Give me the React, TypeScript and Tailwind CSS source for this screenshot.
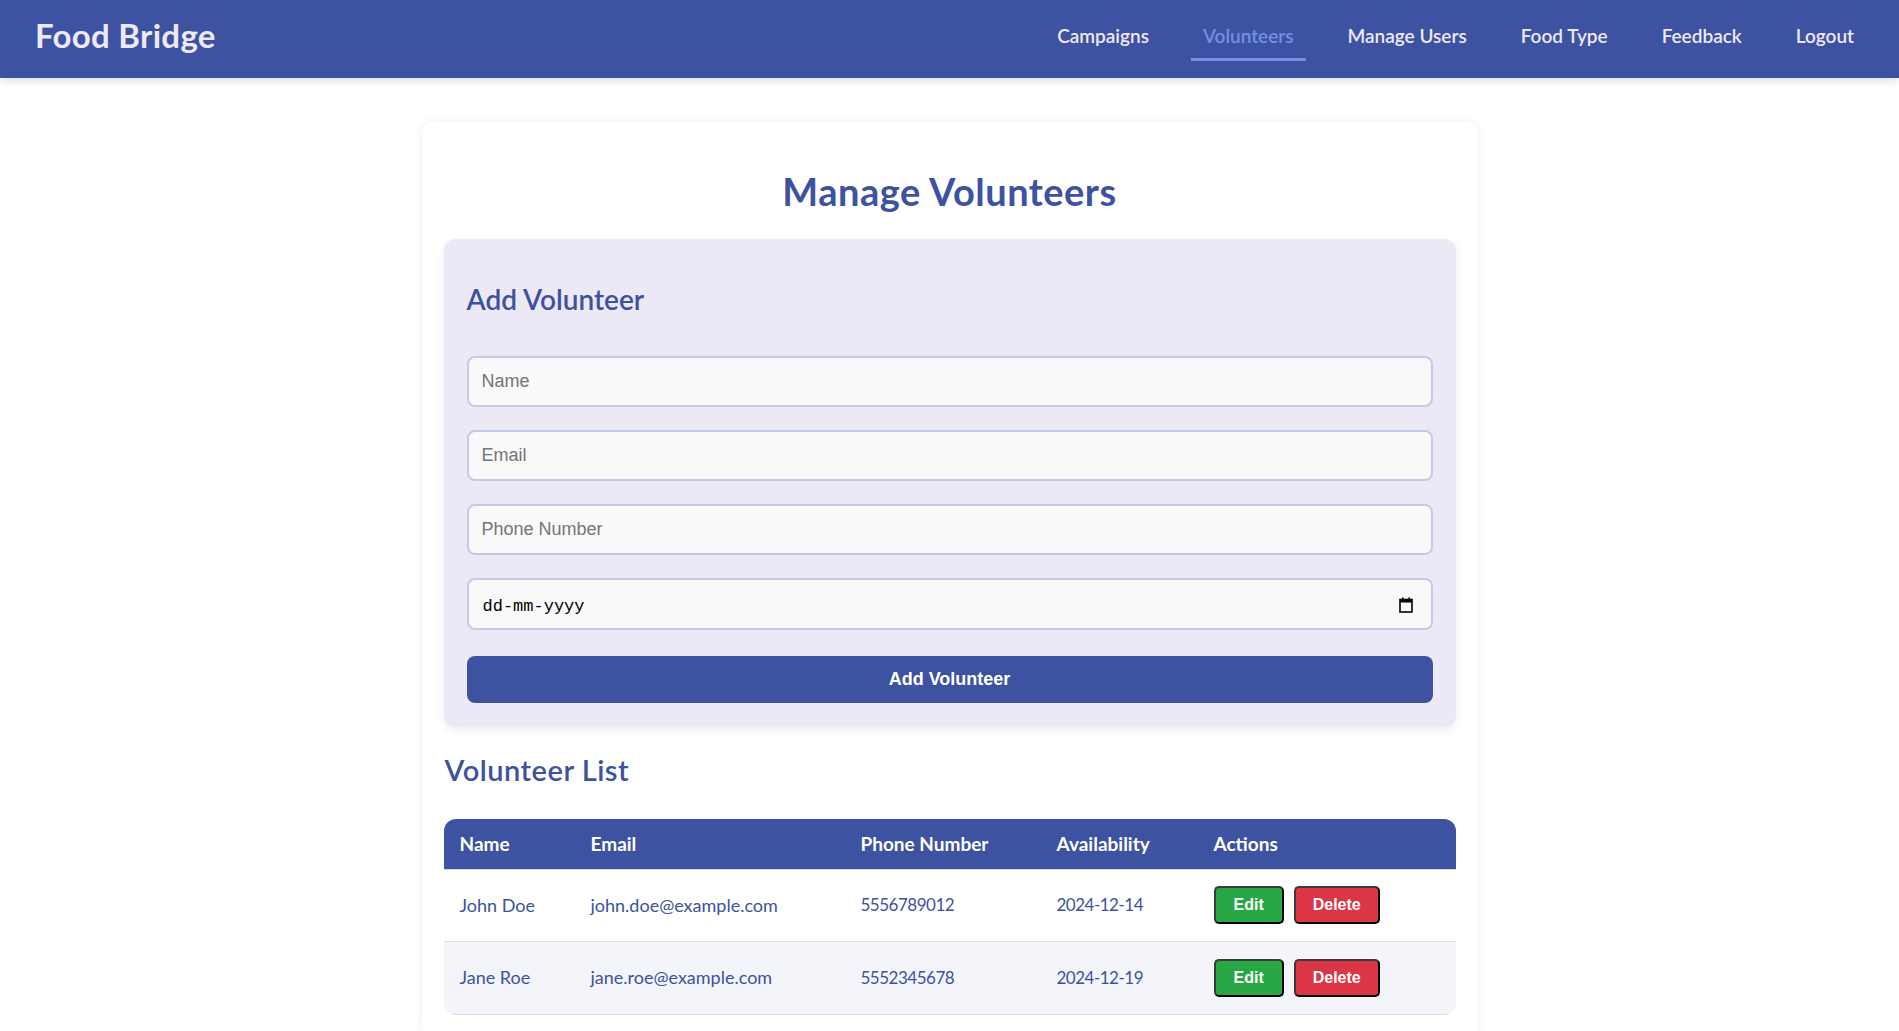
import React from "react";

const navItems = ["Campaigns", "Volunteers", "Manage Users", "Food Type", "Feedback", "Logout"];

const volunteers = [
  { name: "John Doe", email: "john.doe@example.com", phone: "5556789012", date: "2024-12-14" },
  { name: "Jane Roe", email: "jane.roe@example.com", phone: "5552345678", date: "2024-12-19" },
];

function CalendarIcon() {
  return (
    <svg width="14" height="16" viewBox="0 0 14 16" fill="none">
      <rect x="1" y="2.5" width="12" height="12.5" stroke="#000" strokeWidth="1.6" fill="none" />
      <rect x="1" y="2.5" width="12" height="3" fill="#000" />
      <rect x="3" y="0.5" width="1.6" height="3" fill="#000" />
      <rect x="9.4" y="0.5" width="1.6" height="3" fill="#000" />
    </svg>
  );
}

export default function App() {
  return (
    <div className="min-h-screen bg-white font-['Lato',sans-serif]">
      <header className="h-[78px] bg-[#3d52a0] flex items-center justify-between pl-[35px] pr-[33px] shadow-[0_3px_8px_rgba(0,0,0,0.12)]">
        <div className="text-[33px] font-bold text-[#ede8f5] tracking-[0.3px] pb-[7px]">Food Bridge</div>
        <nav className="flex items-center gap-[30px] h-full">
          {navItems.map((item) => (
            <a
              key={item}
              href="#"
              className={
                item === "Volunteers"
                  ? "relative px-3 text-[19px] font-semibold text-[#7091e6] h-full flex items-center"
                  : "relative px-3 text-[19px] font-semibold text-[#ede8f5] h-full flex items-center"
              }
            >
              <span className="mt-[-6px]">{item}</span>
              {item === "Volunteers" && (
                <span className="absolute left-0 right-0 top-[58px] h-[3px] bg-[#7091e6]" />
              )}
            </a>
          ))}
        </nav>
      </header>

      <main className="pt-[44px] pb-10">
        <div className="w-[1056px] mx-auto bg-white rounded-xl shadow-[0_0_12px_rgba(0,0,0,0.07)] px-[22px] pt-[46px] pb-[22px]">
          <h1 className="text-center text-[38px] font-bold text-[#3d52a0] leading-[46px] tracking-[0.5px]">
            Manage Volunteers
          </h1>

          <section className="mt-[25px] bg-[#ede8f5] rounded-xl shadow-[0_3px_10px_rgba(0,0,0,0.08)] px-[23px] pt-[43px] pb-[24px]">
            <h2 className="text-[28px] font-semibold text-[#3d52a0] leading-[34px]">Add Volunteer</h2>
            <form className="mt-[40px] flex flex-col gap-[23px]" onSubmit={(e) => e.preventDefault()}>
              <input
                type="text"
                placeholder="Name"
                className="h-[51px] w-full rounded-lg border-2 border-[#c3cae8] bg-[#f9f9f9] px-[13px] font-['Liberation_Sans',sans-serif] text-[18px] placeholder:text-[#757575] outline-none"
              />
              <input
                type="text"
                placeholder="Email"
                className="h-[51px] w-full rounded-lg border-2 border-[#c3cae8] bg-[#f9f9f9] px-[13px] font-['Liberation_Sans',sans-serif] text-[18px] placeholder:text-[#757575] outline-none"
              />
              <input
                type="text"
                placeholder="Phone Number"
                className="h-[51px] w-full rounded-lg border-2 border-[#c3cae8] bg-[#f9f9f9] px-[13px] font-['Liberation_Sans',sans-serif] text-[18px] placeholder:text-[#757575] outline-none"
              />
              <div className="relative">
                <input
                  type="text"
                  placeholder="dd-mm-yyyy"
                  className="h-[52px] w-full rounded-lg border-2 border-[#c3cae8] bg-[#f9f9f9] px-[14px] pt-[4px] font-['Liberation_Mono',monospace] text-[17px] placeholder:text-black outline-none"
                />
                <span className="absolute right-[20px] top-[19px]">
                  <CalendarIcon />
                </span>
              </div>
              <button
                type="submit"
                className="h-[47px] w-full rounded-lg bg-[#3d52a0] text-white font-['Liberation_Sans',sans-serif] font-bold text-[18px] mt-[3px]"
              >
                Add Volunteer
              </button>
            </form>
          </section>

          <h2 className="mt-[25px] ml-[1px] text-[29px] font-semibold text-[#3d52a0] leading-[36px] tracking-[0.5px]">
            Volunteer List
          </h2>

          <div className="mt-[31px] rounded-xl overflow-hidden">
            <table className="w-full border-collapse text-left">
              <colgroup>
                <col className="w-[131px]" />
                <col className="w-[270px]" />
                <col className="w-[196px]" />
                <col className="w-[157px]" />
                <col />
              </colgroup>
              <thead>
                <tr className="bg-[#3d52a0] text-white h-[50px] border-b border-[#dddddd]">
                  <th className="px-4 text-[19px] font-bold">Name</th>
                  <th className="px-4 text-[19px] font-bold">Email</th>
                  <th className="px-4 text-[19px] font-bold">Phone Number</th>
                  <th className="px-4 text-[19px] font-bold">Availability</th>
                  <th className="px-4 text-[19px] font-bold">Actions</th>
                </tr>
              </thead>
              <tbody>
                {volunteers.map((v, i) => (
                  <tr
                    key={v.email}
                    className={
                      i % 2 === 1
                        ? "bg-[#f4f5fa] h-[73px] border-b border-[#dddddd] text-[#3d52a0]"
                        : "bg-white h-[72px] border-b border-[#dddddd] text-[#3d52a0]"
                    }
                  >
                    <td className="px-4 text-[18px]">{v.name}</td>
                    <td className="px-4 text-[18px]">{v.email}</td>
                    <td className="px-4 text-[17px] tracking-[-0.5px]">{v.phone}</td>
                    <td className="px-4 text-[17px] tracking-[-0.5px]">{v.date}</td>
                    <td className="px-4">
                      <div className="flex gap-[10px]">
                        <button className="h-[38px] px-[18px] rounded-[5px] border-2 border-[#3a3a3a] [border-style:outset] bg-[#28a745] text-white font-['Liberation_Sans',sans-serif] font-bold text-[16px]">
                          Edit
                        </button>
                        <button className="h-[38px] px-[17px] rounded-[5px] border-2 border-[#3a3a3a] [border-style:outset] bg-[#dc3545] text-white font-['Liberation_Sans',sans-serif] font-bold text-[16px]">
                          Delete
                        </button>
                      </div>
                    </td>
                  </tr>
                ))}
              </tbody>
            </table>
          </div>
        </div>
      </main>
    </div>
  );
}
